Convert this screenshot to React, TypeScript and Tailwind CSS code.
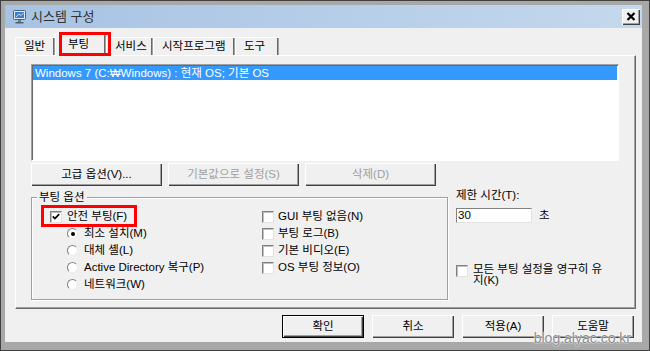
import React from "react";

const FONT = "font-['Liberation_Sans','Noto_Sans_CJK_KR',sans-serif]";

const Checkbox = ({ checked = false }: { checked?: boolean }) => (
  <span className="flex w-[12px] h-[12px] shrink-0 bg-white border border-t-[#808080] border-l-[#808080] border-r-[#e3e3e3] border-b-[#e3e3e3] shadow-[inset_1px_1px_0_#c0c0c0]">
    {checked && (
      <svg viewBox="0 0 10 10" className="w-full h-full">
        <path d="M1.8 4.4 L3.9 6.6 L8.2 2.2" stroke="#000" strokeWidth="1.7" fill="none" />
      </svg>
    )}
  </span>
);

const Radio = ({ checked = false }: { checked?: boolean }) => (
  <span className="flex items-center justify-center w-[11px] h-[11px] shrink-0 rounded-full bg-white border border-t-[#808080] border-l-[#808080] border-r-[#ececec] border-b-[#ececec]">
    {checked && <span className="w-[4px] h-[4px] rounded-full bg-black" />}
  </span>
);

const Button = ({
  label,
  width,
  disabled = false,
  primary = false,
}: {
  label: string;
  width: string;
  disabled?: boolean;
  primary?: boolean;
}) => (
  <div
    className={`flex items-center justify-center h-[23px] ${width} bg-[#f0f0f0] ${
      primary
        ? "border border-black shadow-[inset_1px_1px_0_#fff,inset_-1px_-1px_0_#404040,inset_-2px_-2px_0_#a0a0a0]"
        : "shadow-[inset_1px_1px_0_#fff,inset_-1px_-1px_0_#404040,inset_-2px_-2px_0_#a0a0a0]"
    } ${disabled ? "text-[#a0a0a0]" : "text-black"}`}
  >
    {label}
  </div>
);

const Tab = ({ label, width }: { label: string; width: string }) => (
  <div
    className={`h-[18px] ${width} pl-[8px] leading-[17px] border-t border-l border-white rounded-tl-[2px] shadow-[inset_-1px_0_0_#a0a0a0,inset_-2px_0_0_#696969]`}
  >
    {label}
  </div>
);

const App = () => {
  const leftOptions = [
    { label: "최소 설치(M)", checked: true },
    { label: "대체 셸(L)", checked: false },
    { label: "Active Directory 복구(P)", checked: false },
    { label: "네트워크(W)", checked: false },
  ];
  const rightOptions = ["GUI 부팅 없음(N)", "부팅 로그(B)", "기본 비디오(E)", "OS 부팅 정보(O)"];

  return (
    <div
      className={`relative w-[650px] h-[351px] flex flex-col bg-[#a8a8a8] border border-[#404040] pt-[4px] pl-[4px] pr-[7px] pb-[8px] text-[11.5px] text-black ${FONT}`}
    >
      {/* title bar */}
      <div className="h-[23px] flex items-center pl-[7px] pr-[2px] bg-gradient-to-r from-[#a7c3e3] to-[#c4d8ed]">
        <svg width="16" height="15" viewBox="0 0 16 15">
          <rect x="1.5" y="1.5" width="12" height="9" rx="1" fill="#e3e9f0" stroke="#4f5f70" />
          <rect x="3" y="3" width="9" height="6" fill="#3b7dd4" />
          <path d="M4 8 L7 5 L9 6.5 L11.5 4" stroke="#bfe0ff" strokeWidth="1" fill="none" />
          <rect x="6" y="11" width="3" height="2" fill="#6b7b8b" />
          <rect x="3.5" y="13" width="8" height="1.5" fill="#4f5f70" />
        </svg>
        <span className="ml-[3px] text-[13px] text-[#303030] leading-[16px]">시스템 구성</span>
        <div className="ml-auto flex items-center justify-center w-[18px] h-[16px] bg-[#f0f0f0] shadow-[inset_1px_1px_0_#fff,inset_-1px_-1px_0_#404040,inset_-2px_-2px_0_#a0a0a0]">
          <svg width="10" height="9" viewBox="0 0 10 9">
            <path d="M1.5 1 L8.5 8 M8.5 1 L1.5 8" stroke="#000" strokeWidth="2.2" />
          </svg>
        </div>
      </div>

      {/* client area */}
      <div className="flex-1 flex flex-col bg-[#f0f0f0] pl-[10px] pr-[6px] pt-[5px]">
        {/* tabs */}
        <div className="flex items-end h-[22px]">
          <Tab label="일반" width="w-[40px]" />
          <div className="relative z-10 h-[23px] w-[51px] -mb-[1px] pl-[12px] pt-[2px] leading-[17px] bg-[#f0f0f0] border-t border-l border-white rounded-tl-[2px] shadow-[inset_-1px_0_0_#a0a0a0,inset_-2px_0_0_#696969]">
            부팅
            <div className="absolute left-[3px] -top-[2px] w-[52px] h-[24px] border-[3px] border-[#ff0000]" />
          </div>
          <Tab label="서비스" width="w-[47px]" />
          <Tab label="시작프로그램" width="w-[82px]" />
          <Tab label="도구" width="w-[44px]" />
        </div>

        {/* tab panel */}
        <div className="h-[254px] flex flex-col border border-t-white border-l-white border-r-[#696969] border-b-[#696969] shadow-[inset_-1px_-1px_0_#a0a0a0] pl-[15px] pr-[16px] pt-[8px]">
          <div className="h-[97px] bg-white border border-t-[#a0a0a0] border-l-[#a0a0a0] border-r-white border-b-white shadow-[inset_1px_1px_0_#696969] pt-[1px] pl-[1px] pr-[1px]">
            <div className="h-[14px] bg-[#3399ff] text-white pl-[2px] leading-[14px]">
              Windows 7 (C:₩Windows) : 현재 OS; 기본 OS
            </div>
          </div>

          <div className="mt-[2px] flex gap-[6px]">
            <Button label="고급 옵션(V)..." width="w-[131px]" />
            <Button label="기본값으로 설정(S)" width="w-[131px]" disabled />
            <Button label="삭제(D)" width="w-[131px]" disabled />
          </div>

          <div className="mt-[2px] flex">
            {/* boot options group */}
            <div className="relative mt-[9px] w-[417px] h-[103px] border border-[#a0a0a0] shadow-[inset_1px_1px_0_#fff,1px_1px_0_#fff]">
              <span className="absolute -top-[8px] left-[5px] px-[2px] leading-[14px] bg-[#f0f0f0]">부팅 옵션</span>
              <div className="flex pl-[18px] pt-[10px]">
                <div className="w-[212px] flex flex-col">
                  <div className="relative h-[17px] flex items-center gap-[5px]">
                    <Checkbox checked />
                    <span>안전 부팅(F)</span>
                    <div className="absolute -left-[9px] -top-[3px] w-[96px] h-[22px] border-[3px] border-[#ff0000]" />
                  </div>
                  {leftOptions.map((o) => (
                    <div key={o.label} className="h-[17px] flex items-center gap-[6px] pl-[17px]">
                      <Radio checked={o.checked} />
                      <span>{o.label}</span>
                    </div>
                  ))}
                </div>
                <div className="flex flex-col">
                  {rightOptions.map((o) => (
                    <div key={o} className="h-[17px] flex items-center gap-[4px]">
                      <Checkbox />
                      <span>{o}</span>
                    </div>
                  ))}
                </div>
              </div>
            </div>

            {/* timeout column */}
            <div className="ml-[8px] flex flex-col">
              <div className="h-[14px] leading-[14px]">제한 시간(T):</div>
              <div className="mt-[5px] flex items-center gap-[7px]">
                <div className="w-[76px] h-[15px] bg-white border border-t-[#808080] border-l-[#808080] border-r-[#e3e3e3] border-b-[#e3e3e3] pl-[1px] leading-[13px]">
                  30
                </div>
                <span>초</span>
              </div>
              <div className="mt-[40px] flex items-start gap-[5px]">
                <span className="mt-[1px]">
                  <Checkbox />
                </span>
                <span className="leading-[11px]">
                  모든 부팅 설정을 영구히 유
                  <br />
                  지(K)
                </span>
              </div>
            </div>
          </div>
        </div>

        {/* dialog buttons */}
        <div className="mt-[6px] flex justify-end gap-[8px] pr-[2px]">
          <Button label="확인" width="w-[82px]" primary />
          <Button label="취소" width="w-[82px]" />
          <Button label="적용(A)" width="w-[82px]" />
          <Button label="도움말" width="w-[82px]" />
        </div>
      </div>

      <span className="absolute right-[18px] bottom-[4px] text-[14px] leading-[16px] text-[#8c8c8c] [text-shadow:0_0_2px_#fff,0_0_1px_#fff] font-['Liberation_Sans',sans-serif]">
        blog.alyac.co.kr
      </span>
    </div>
  );
};

export default App;
